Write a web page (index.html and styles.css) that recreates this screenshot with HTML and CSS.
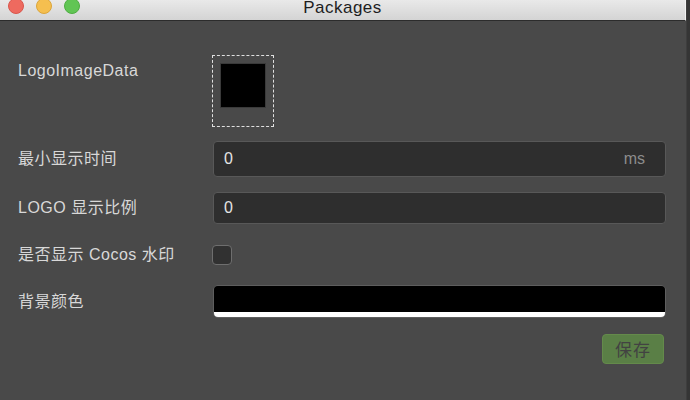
FILE: index.html
```html
<!DOCTYPE html>
<html lang="zh">
<head>
<meta charset="utf-8">
<title>Packages</title>
<link rel="stylesheet" href="styles.css">
</head>
<body>
<div class="screen">
  <div class="window">
    <div class="titlebar">
      <div class="lights">
        <span class="light red"></span>
        <span class="light yellow"></span>
        <span class="light green"></span>
      </div>
      <div class="title">Packages</div>
      <div></div>
    </div>
    <div class="content">
      <div class="row row-image">
        <div class="label label-top">LogoImageData</div>
        <div class="image-drop"><div class="image-preview"></div></div>
      </div>
      <div class="row row-input-tall">
        <div class="label">最小显示时间</div>
        <div class="input"><span class="value">0</span><span class="unit">ms</span></div>
      </div>
      <div class="row row-input">
        <div class="label">LOGO 显示比例</div>
        <div class="input"><span class="value">0</span></div>
      </div>
      <div class="row row-check">
        <div class="label">是否显示 Cocos 水印</div>
        <div class="checkbox"></div>
      </div>
      <div class="row row-color">
        <div class="label">背景颜色</div>
        <div class="color-field"><div class="color-main"></div><div class="color-alpha"></div></div>
      </div>
      <div class="actions">
        <button class="save">保存</button>
      </div>
    </div>
  </div>
  <div class="edge"></div>
</div>
</body>
</html>
```
FILE: styles.css
```css
html, body {
  margin: 0;
  padding: 0;
  width: 690px;
  height: 400px;
  overflow: hidden;
  background: #494949;
  font-family: "Liberation Sans", "Noto Sans CJK SC", sans-serif;
}

.screen {
  display: flex;
  width: 690px;
  height: 400px;
}

.window {
  width: 686px;
  height: 400px;
  display: flex;
  flex-direction: column;
  background: #494949;
}

.edge {
  width: 4px;
  height: 400px;
  background: #353535;
  border-left: 1px solid #3e3e3e;
  box-sizing: border-box;
}

.titlebar {
  height: 20px;
  border-bottom: 1px solid #2c2c2c;
  border-right: 1px solid #f2f2f2;
  background: linear-gradient(#e9e9e9, #d4d4d4);
  display: grid;
  grid-template-columns: 1fr auto 1fr;
  overflow: hidden;
}

.lights {
  display: flex;
  gap: 12px;
  padding-left: 8px;
  margin-top: -2px;
}

.light {
  width: 16px;
  height: 16px;
  border-radius: 50%;
  box-sizing: border-box;
}

.red { background: #ee6a5f; border: 1px solid #d9564c; }
.yellow { background: #f5bf4f; border: 1px solid #dba53b; }
.green { background: #61c554; border: 1px solid #4ead42; }

.title {
  font-size: 17px;
  letter-spacing: 0.5px;
  line-height: 16px;
  color: #1e1e1e;
}

.content {
  padding: 34px 20px 0 18px;
  display: flex;
  flex-direction: column;
}

.row {
  display: flex;
  align-items: center;
}

.label {
  width: 195px;
  flex: none;
  font-size: 16px;
  letter-spacing: 0.5px;
  line-height: 20px;
  color: #d8d8d8;
}

.row-image {
  align-items: flex-start;
  height: 72px;
}

.label-top {
  margin-top: 6px;
}

.image-drop {
  width: 62px;
  height: 72px;
  box-sizing: border-box;
  border: 1px dashed #e0e0e0;
  margin-left: -1px;
  padding: 7px 0 0 7px;
}

.image-preview {
  width: 46px;
  height: 45px;
  box-sizing: border-box;
  background: #000;
  border: 1px solid #3a3a3a;
}

.row-input-tall {
  margin-top: 14px;
  height: 36px;
}

.row-input {
  margin-top: 15px;
  height: 32px;
}

.input {
  flex: 1;
  height: 100%;
  box-sizing: border-box;
  background: #2e2e2e;
  border: 1px solid #585858;
  border-radius: 4px;
  display: flex;
  align-items: center;
  justify-content: space-between;
  padding: 0 20px 0 10px;
}

.value {
  font-size: 16px;
  color: #e4e4e4;
}

.unit {
  font-size: 16px;
  color: #8c8c8c;
}

.row-check {
  margin-top: 16px;
  height: 30px;
}

.checkbox {
  width: 20px;
  height: 20px;
  box-sizing: border-box;
  margin-left: -1px;
  background: #313131;
  border: 1px solid #6e6e6e;
  border-radius: 4px;
}

.row-color {
  margin-top: 15px;
  height: 33px;
}

.color-field {
  flex: 1;
  height: 33px;
  box-sizing: border-box;
  border: 1px solid #5e5e5e;
  border-radius: 5px;
  overflow: hidden;
  display: flex;
  flex-direction: column;
}

.color-main {
  height: 26px;
  background: #000;
}

.color-alpha {
  flex: 1;
  background: #fff;
}

.actions {
  margin-top: 16px;
  display: flex;
  justify-content: flex-end;
  padding-right: 2px;
}

.save {
  width: 62px;
  height: 30px;
  box-sizing: border-box;
  background: #5a7f46;
  border: 1px solid #648a4b;
  border-radius: 4px;
  color: #424242;
  font-family: "Noto Sans CJK SC", sans-serif;
  font-size: 17px;
  line-height: 20px;
  padding: 0;
  letter-spacing: 1px;
}
```
